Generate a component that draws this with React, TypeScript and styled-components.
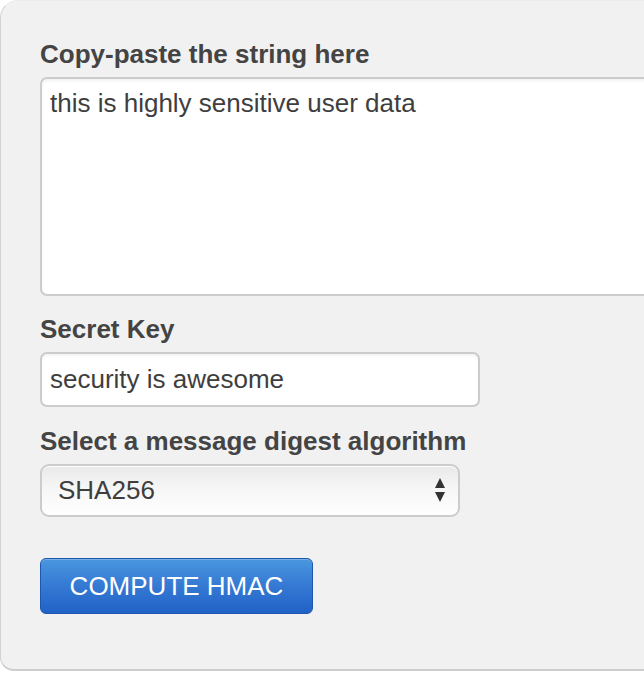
import styled, { createGlobalStyle } from "styled-components";

const GlobalStyle = createGlobalStyle`
  html, body {
    margin: 0;
    padding: 0;
    background: #ffffff;
    overflow: hidden;
  }
  body {
    font-family: "Liberation Sans", Arial, Helvetica, sans-serif;
  }
`;

const Panel = styled.form`
  box-sizing: border-box;
  width: 720px;
  height: 671px;
  padding: 38px 0 0 39px;
  background: #f1f1f1;
  border: 1px solid #d2d2d2;
  border-top-color: #ececec;
  border-bottom: 2px solid #cdcdcd;
  border-radius: 18px 0 0 14px;
`;

const Label = styled.label<{ $gap?: number }>`
  display: block;
  margin-top: ${(p) => p.$gap ?? 0}px;
  margin-bottom: 8px;
  font-size: 26px;
  line-height: 30px;
  font-weight: 700;
  color: #444444;
`;

const fieldBase = `
  box-sizing: border-box;
  display: block;
  font-family: "Liberation Sans", Arial, Helvetica, sans-serif;
  font-size: 26px;
  line-height: 30px;
  color: #3e3e3e;
  background: #ffffff;
  border: 2px solid #cccccc;
  border-radius: 7px;
  outline: none;
  margin: 0;
`;

const TextArea = styled.textarea`
  ${fieldBase}
  width: 660px;
  height: 219px;
  padding: 9px 8px;
  resize: none;
  box-shadow: inset 0 2px 3px rgba(0, 0, 0, 0.06);
`;

const TextInput = styled.input`
  ${fieldBase}
  width: 440px;
  height: 55px;
  padding: 0 8px 1px;
  box-shadow: inset 0 2px 3px rgba(0, 0, 0, 0.05);
`;

const SelectWrap = styled.div`
  position: relative;
  width: 420px;
  height: 53px;
`;

const Select = styled.select`
  ${fieldBase}
  appearance: none;
  -webkit-appearance: none;
  width: 100%;
  height: 100%;
  padding: 0 40px 1px 16px;
  border-radius: 9px;
  background: linear-gradient(#e9e9e9 0%, #f6f6f6 45%, #ffffff 100%);
  box-shadow: inset 0 1px 0 #ffffff;
`;

const Arrows = styled.svg`
  position: absolute;
  right: 14px;
  top: 13px;
  pointer-events: none;
`;

const ComputeButton = styled.button`
  display: block;
  box-sizing: border-box;
  margin-top: 41px;
  width: 273px;
  height: 56px;
  padding: 0;
  font-family: "Liberation Sans", Arial, Helvetica, sans-serif;
  font-size: 26px;
  color: #ffffff;
  background: linear-gradient(#4a97df 0%, #3579d3 50%, #2062c6 100%);
  border: 1px solid #1d57b0;
  border-radius: 6px;
  box-shadow: inset 0 1px 0 rgba(255, 255, 255, 0.25);
  cursor: pointer;
`;

export default function App() {
  return (
    <>
      <GlobalStyle />
      <Panel onSubmit={(e) => e.preventDefault()}>
        <Label htmlFor="input-string">Copy-paste the string here</Label>
        <TextArea
          id="input-string"
          defaultValue="this is highly sensitive user data"
        />

        <Label htmlFor="secret-key" $gap={18}>
          Secret Key
        </Label>
        <TextInput id="secret-key" defaultValue="security is awesome" />

        <Label htmlFor="algorithm" $gap={19}>
          Select a message digest algorithm
        </Label>
        <SelectWrap>
          <Select id="algorithm" defaultValue="SHA256">
            <option>MD5</option>
            <option>SHA1</option>
            <option>SHA256</option>
            <option>SHA384</option>
            <option>SHA512</option>
          </Select>
          <Arrows width="12" height="26" viewBox="0 0 12 26">
            <polygon points="6,1 11,11 1,11" fill="#333" />
            <polygon points="1,15 11,15 6,25" fill="#333" />
          </Arrows>
        </SelectWrap>

        <ComputeButton type="submit">COMPUTE HMAC</ComputeButton>
      </Panel>
    </>
  );
}
